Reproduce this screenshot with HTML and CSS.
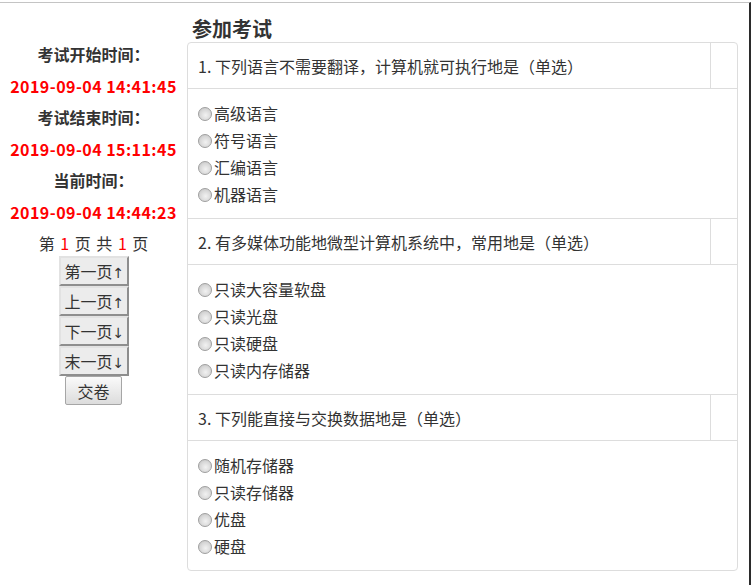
FILE: index.html
```html
<!DOCTYPE html>
<html lang="zh-CN">
<head>
<meta charset="UTF-8">
<meta name="viewport" content="width=device-width, initial-scale=1.0">
<title>参加考试</title>
<link rel="stylesheet" href="styles.css">
</head>
<body>
<div class="frame">
    <div class="side">
        <div class="label">考试开始时间：</div>
        <div class="time">2019-09-04 14:41:45</div>
        <div class="label">考试结束时间：</div>
        <div class="time">2019-09-04 15:11:45</div>
        <div class="label">当前时间：</div>
        <div class="time">2019-09-04 14:44:23</div>
        <div class="pager">第 <span class="num">1</span> 页 共 <span class="num">1</span> 页</div>
        <button class="page-btn">第一页<span class="arrow">↑</span></button>
        <button class="page-btn">上一页<span class="arrow">↑</span></button>
        <button class="page-btn">下一页<span class="arrow">↓</span></button>
        <button class="page-btn">末一页<span class="arrow">↓</span></button>
        <button class="submit-btn">交卷</button>
    </div>
    <div class="exam">
        <h3>参加考试</h3>
        <div class="panel">
            <table>
                <tr class="question">
                    <td>1. 下列语言不需要翻译，计算机就可执行地是（单选）</td>
                    <td class="blank"></td>
                </tr>
                <tr class="options">
                    <td colspan="2">
                        <label><input type="radio" name="q1">高级语言</label>
                        <label><input type="radio" name="q1">符号语言</label>
                        <label><input type="radio" name="q1">汇编语言</label>
                        <label><input type="radio" name="q1">机器语言</label>
                    </td>
                </tr>
                <tr class="question">
                    <td>2. 有多媒体功能地微型计算机系统中，常用地是（单选）</td>
                    <td class="blank"></td>
                </tr>
                <tr class="options">
                    <td colspan="2">
                        <label><input type="radio" name="q2">只读大容量软盘</label>
                        <label><input type="radio" name="q2">只读光盘</label>
                        <label><input type="radio" name="q2">只读硬盘</label>
                        <label><input type="radio" name="q2">只读内存储器</label>
                    </td>
                </tr>
                <tr class="question">
                    <td>3. 下列能直接与交换数据地是（单选）</td>
                    <td class="blank"></td>
                </tr>
                <tr class="options last">
                    <td colspan="2">
                        <label><input type="radio" name="q3">随机存储器</label>
                        <label><input type="radio" name="q3">只读存储器</label>
                        <label><input type="radio" name="q3">优盘</label>
                        <label><input type="radio" name="q3">硬盘</label>
                    </td>
                </tr>
            </table>
        </div>
    </div>
</div>
</body>
</html>
```

FILE: styles.css
```css
body {
    margin: 0;
    padding: 0;
    font-family: "Noto Sans CJK SC", "Microsoft YaHei", sans-serif;
    font-size: 16px;
    color: #333;
    background: #fff;
}
.frame {
    margin-top: 2px;
    height: 583px;
    box-sizing: border-box;
    border-top: 1px solid #c4c4c4;
    border-right: 2px solid #2b2b2b;
    display: flex;
}
.side {
    width: 187px;
    padding-top: 35px;
    display: flex;
    flex-direction: column;
    align-items: center;
}
.label {
    font-weight: bold;
    line-height: 33px;
}
.time {
    font-weight: bold;
    color: #f00;
    line-height: 30px;
    letter-spacing: 0.45px;
}
.pager {
    margin-top: 3px;
    line-height: 26px;
    word-spacing: 2px;
}
.num {
    color: #f00;
}
.page-btn {
    width: 70px;
    height: 30px;
    padding: 0;
    font-family: inherit;
    font-size: 16px;
    color: #333;
    background: #ececec;
    border-style: solid;
    border-width: 2px;
    border-color: #e2e2e2 #8e8e8e #8e8e8e #e2e2e2;
}
.arrow {
    font-family: "DejaVu Sans", sans-serif;
    font-size: 14px;
    display: inline-block;
    width: 10px;
}
.submit-btn {
    width: 57px;
    height: 29px;
    padding: 0;
    font-family: inherit;
    font-size: 16px;
    color: #333;
    background: linear-gradient(#fafafa, #dcdcdc);
    border: 1px solid #a6a6a6;
    border-radius: 2px;
}
.exam {
    flex: 1;
    margin-right: 11px;
    padding-top: 13px;
}
.exam h3 {
    margin: 0;
    padding-left: 5px;
    font-size: 20px;
    line-height: 26px;
    color: #333;
}
.panel {
    border: 1px solid #ddd;
    border-radius: 4px;
}
table {
    width: 100%;
    border-collapse: collapse;
}
td {
    padding: 0;
}
.question td {
    height: 45px;
    padding-left: 10px;
    border-bottom: 1px solid #ddd;
}
.question td.blank {
    width: 26px;
    padding: 0;
    border-left: 1px solid #ddd;
}
.options td {
    height: 108px;
    padding: 11px 10px 10px;
    border-bottom: 1px solid #ddd;
}
.options.last td {
    border-bottom: none;
}
.options label {
    display: block;
    line-height: 27px;
}
input[type="radio"] {
    appearance: none;
    width: 14px;
    height: 14px;
    margin: 0 2px 0 0;
    vertical-align: -1px;
    border: 1px solid #a0a0a0;
    border-radius: 50%;
    background: radial-gradient(circle at 55% 60%, #f2f2f2 0, #d8d8d8 55%, #bdbdbd 100%);
}
```
